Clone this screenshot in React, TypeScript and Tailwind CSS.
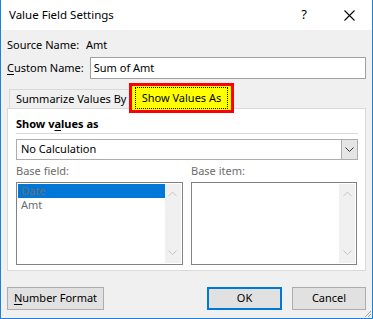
import React from "react";

const font = { fontFamily: '"Noto Sans", "Segoe UI", sans-serif' };

function Chevron({ dir, color }: { dir: "up" | "down"; color: string }) {
  return (
    <svg width="9" height="6" viewBox="0 0 9 6">
      {dir === "down" ? (
        <path d="M0.5 0.5 L4.5 4.5 L8.5 0.5" fill="none" stroke={color} strokeWidth="1" />
      ) : (
        <path d="M0.5 5 L4.5 1 L8.5 5" fill="none" stroke={color} strokeWidth="1" />
      )}
    </svg>
  );
}

function ListBox({ items }: { items: { label: string; selected?: boolean }[] }) {
  return (
    <div className="flex h-[83px] w-[167px] border border-[#828282] bg-white p-[1px]">
      <div className="flex flex-1 flex-col">
        {items.map((it) => (
          <div
            key={it.label}
            className={`h-[14px] overflow-hidden pl-[3px] text-[11px] leading-[14px] ${
              it.selected ? "bg-[#0078d7] text-[#6d6d6d]" : "text-[#6d6d6d]"
            }`}
          >
            {it.label}
          </div>
        ))}
      </div>
      <div className="flex w-[16px] flex-col items-center justify-between bg-[#f0f0f0] py-[7px]">
        <Chevron dir="up" color="#c4c4c4" />
        <Chevron dir="down" color="#c4c4c4" />
      </div>
    </div>
  );
}

export default function App() {
  return (
    <div
      style={font}
      className="flex h-[319px] w-[373px] flex-col whitespace-nowrap border-x border-b border-[#1883d7] bg-[#f0f0f0] text-[11px] text-black"
    >
      {/* Title bar */}
      <div className="flex h-[30px] items-center bg-white pl-[8px]">
        <span className="text-[11.5px]">Value Field Settings</span>
        <div className="ml-auto flex items-center">
          <span className="mr-[37px] text-[13px]">?</span>
          <svg width="11" height="11" viewBox="0 0 11 11" className="mr-[17px]">
            <path d="M0.5 0.5 L10.5 10.5 M10.5 0.5 L0.5 10.5" stroke="#000" strokeWidth="1.1" />
          </svg>
        </div>
      </div>

      {/* Body */}
      <div className="flex flex-1 flex-col px-[6px]">
        <div className="mt-[5px] flex h-[20px] items-center">
          <span className="w-[79px]">Source Name:</span>
          <span>Amt</span>
        </div>
        <div className="mt-[2px] flex h-[22px] items-center">
          <span className="w-[83px]">
            <span className="underline underline-offset-2">C</span>ustom Name:
          </span>
          <div className="flex h-[22px] w-[277px] items-center border border-[#a0a0a0] bg-white pl-[3px]">
            Sum of Amt
          </div>
        </div>

        {/* Tabs */}
        <div className="mt-[5px] flex h-[24px] items-end pl-[2px]">
          <div className="flex h-[19px] w-[120px] items-center border-l border-t border-[#d9d9d9] pl-[6px]">
            Summarize Values By
          </div>
          <div className="relative z-10 -mb-[5px] flex h-[30px] w-[105px] items-center justify-center border-[3px] border-[#ff0000] bg-[#ffff00]">
            <div className="flex h-[22px] w-[93px] items-center justify-center border border-dotted border-black">
              Show Values As
            </div>
          </div>
        </div>

        {/* Panel */}
        <div className="flex h-[163px] flex-col border border-[#d9d9d9] bg-white px-[8px]">
          <div className="mt-[7px] flex h-[17px] items-center font-bold">
            Show v<span className="underline underline-offset-2">a</span>lues as
          </div>
          <div className="h-px w-[342px] bg-[#d9d9d9]" />
          <div className="mt-[5px] flex h-[21px] w-[342px] items-center border border-[#adadad] bg-white">
            <span className="flex-1 pl-[4px]">No Calculation</span>
            <div className="-mr-px flex h-[21px] w-[17px] items-center justify-center border border-[#adadad] bg-[#e5e5e5]">
              <Chevron dir="down" color="#333" />
            </div>
          </div>
          <div className="mt-[3px] flex h-[17px] items-center text-[#6d6d6d]">
            <span className="w-[175px]">Base field:</span>
            <span>Base item:</span>
          </div>
          <div className="mt-[2px] flex gap-[8px]">
            <ListBox items={[{ label: "Date", selected: true }, { label: "Amt" }]} />
            <ListBox items={[]} />
          </div>
        </div>

        {/* Buttons */}
        <div className="mt-[16px] flex h-[23px] items-center">
          <div className="flex h-[23px] w-[97px] items-center justify-center border border-[#adadad] bg-[#e1e1e1]">
            <span className="underline underline-offset-2">N</span>umber Format
          </div>
          <div className="ml-auto flex h-[23px] w-[75px] items-center justify-center border-2 border-[#0078d7] bg-[#e1e1e1]">
            OK
          </div>
          <div className="ml-[10px] flex h-[23px] w-[74px] items-center justify-center border border-[#adadad] bg-[#e1e1e1]">
            Cancel
          </div>
        </div>
        <div className="relative flex-1">
          <svg width="8" height="8" viewBox="0 0 8 8" className="absolute bottom-0 -right-[6px]">
            <path d="M7 1 L1 7 M7 4 L4 7" stroke="#a0a0a0" strokeWidth="1" />
          </svg>
        </div>
      </div>
    </div>
  );
}
